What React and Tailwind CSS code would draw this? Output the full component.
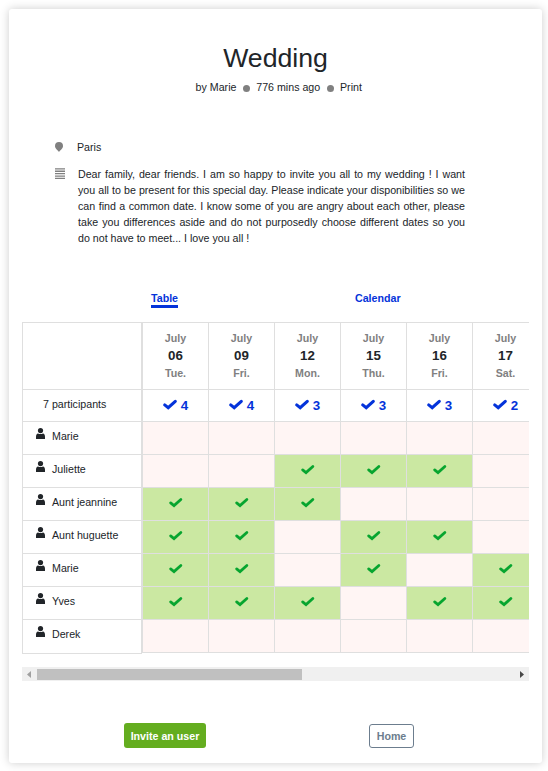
const days = [
  { day: "06", name: "Tue.", count: 4 },
  { day: "09", name: "Fri.", count: 4 },
  { day: "12", name: "Mon.", count: 3 },
  { day: "15", name: "Thu.", count: 3 },
  { day: "16", name: "Fri.", count: 3 },
  { day: "17", name: "Sat.", count: 2 },
];

const participants = [
  { name: "Marie", votes: [0, 0, 0, 0, 0, 0] },
  { name: "Juliette", votes: [0, 0, 1, 1, 1, 0] },
  { name: "Aunt jeannine", votes: [1, 1, 1, 0, 0, 0] },
  { name: "Aunt huguette", votes: [1, 1, 0, 1, 1, 0] },
  { name: "Marie", votes: [1, 1, 0, 1, 0, 1] },
  { name: "Yves", votes: [1, 1, 1, 0, 1, 1] },
  { name: "Derek", votes: [0, 0, 0, 0, 0, 0] },
];

function Tick({ className, weight }) {
  return (
    <svg className={className} viewBox="0 0 14 10" fill="none" stroke="currentColor" strokeWidth={weight} strokeLinecap="round">
      <path d="M1.7 4.9 L5.2 7.7 L12.3 1.4" />
    </svg>
  );
}

function Person() {
  return (
    <svg className="mt-[6px] ml-[13px] h-[12px] w-[9px] shrink-0" viewBox="0 0 9 12" fill="#212529">
      <circle cx="4.5" cy="2.6" r="2.6" />
      <path d="M0 11V8.7C0 6.9 .8 5.6 2 5.4C3.5 6.1 5.5 6.1 7 5.4C8.2 5.6 9 6.9 9 8.7V11Z" />
    </svg>
  );
}

function Dot() {
  return <span className="mt-[3px] size-[7px] rounded-full bg-[#808080]" />;
}

export default function App() {
  return (
    <div className="h-[771px] w-[548px] overflow-hidden bg-white pt-[9px] pl-[9px] font-['Liberation_Sans',Arial,sans-serif] text-[10.67px] leading-4 text-[#212529]">
      <main className="flex h-[754px] w-[533px] flex-col rounded-[3px] bg-white px-[13px] shadow-[0_0_10px_rgba(0,0,0,0.2)]">
        <h1 className="mt-[33px] text-center text-[26.67px] leading-8">Wedding</h1>
        <div className="mt-[5px] flex h-4 items-center justify-center gap-[6.4px] pl-[6.5px]">
          <span>by Marie</span>
          <Dot />
          <span>776 mins ago</span>
          <Dot />
          <span>Print</span>
        </div>

        <section className="mt-[44px] ml-[33px] w-[410px]">
          <div className="flex h-4">
            <svg className="mt-[3px] mr-[14px] h-[10px] w-2" viewBox="0 0 8 10" fill="#808080">
              <path d="M4 0A4 4 0 0 0 0 4C0 6.8 2.6 8 4 10C5.4 8 8 6.8 8 4A4 4 0 0 0 4 0Z" />
            </svg>
            Paris
          </div>
          <div className="mt-[11px] flex">
            <svg className="mt-[2px] mr-[13px] h-[11px] w-[10px] shrink-0" viewBox="0 0 10 11" fill="#808080">
              <path d="M0 .2h10v1.3H0zM0 2.6h10v1.3H0zM0 5h10v1.3H0zM0 7.4h10v1.3H0zM0 9.7h10v1.3H0z" />
            </svg>
            <p className="w-[387px] text-justify">
              Dear family, dear friends. I am so happy to invite you all to my wedding ! I want you all to be present for this special day. Please indicate your disponibilities so we can find a common date. I know some of you are angry about each other, please take you differences aside and do not purposedly choose different dates so you do not have to meet... I love you all !
            </p>
          </div>
        </section>

        <nav className="mt-[44px] flex h-[32px] font-bold text-[#0433da]">
          <div className="ml-[129px] h-[18px] w-[27px] border-b-[3px] border-[#0433da]">Table</div>
          <div className="ml-[177px]">Calendar</div>
        </nav>

        <div className="flex w-[507px] overflow-hidden">
          <div className="w-[120px] shrink-0 border-x border-b border-[#dfdfdf]">
            <div className="h-[67px] border-t border-[#dfdfdf]" />
            <div className="h-[32px] border-t border-[#dfdfdf] pt-[6px] pl-[20px]">7 participants</div>
            {participants.map((p, i) => (
              <div key={i} className="flex h-[33px] border-t border-[#dfdfdf] last:h-[34px]">
                <Person />
                <span className="mt-[6px] ml-[7px]">{p.name}</span>
              </div>
            ))}
          </div>
          <div className="flex h-[331px] border-b border-l border-[#dfdfdf]">
            {days.map((d, c) => (
              <div key={d.day} className="w-[66px] shrink-0 border-r border-[#dfdfdf]">
                <div className="flex h-[67px] flex-col items-center border-t border-[#dfdfdf] pt-[7px] font-bold text-[#808080]">
                  <span>July</span>
                  <span className="mt-px text-[13.33px] leading-[18px] text-[#212529]">{d.day}</span>
                  <span>{d.name}</span>
                </div>
                <div className="flex h-[32px] justify-center gap-[4px] border-t border-[#dfdfdf] pt-[8px] text-[13.33px] font-bold text-[#0433da]">
                  <Tick weight="3.1" className="mt-[1.5px] h-[10px] w-[14px] overflow-visible" />
                  <span>{d.count}</span>
                </div>
                {participants.map((p, i) => (
                  <div
                    key={i}
                    className={`flex h-[33px] justify-center border-t border-[#dfdfdf] pt-[9.5px] ${p.votes[c] ? "bg-[#cbe8a2]" : "bg-[#fff5f4]"}`}
                  >
                    {p.votes[c] ? <Tick weight="2.9" className="h-[10px] w-[13.5px] overflow-visible text-[#07a52f]" /> : null}
                  </div>
                ))}
              </div>
            ))}
          </div>
        </div>

        <div className="mt-[13px] flex h-[14px] w-[507px] items-center bg-[#f0f0f0]">
          <svg className="ml-[5px] h-[7px] w-[4px]" viewBox="0 0 4 7" fill="#a0a0a0">
            <path d="M4 0V7L0 3.5Z" />
          </svg>
          <div className="ml-[6px] h-[11px] w-[265px] bg-[#c0c0c0]" />
          <svg className="mr-[5px] ml-auto h-[7px] w-[4px]" viewBox="0 0 4 7" fill="#484848">
            <path d="M0 0V7L4 3.5Z" />
          </svg>
        </div>

        <div className="mt-[42px] flex items-start font-bold">
          <button className="ml-[102px] h-[25px] w-[82px] rounded-[3px] bg-[#64ad1f] pt-px text-white">Invite an user</button>
          <button className="mt-px ml-[163px] h-[24px] w-[45px] rounded-[3px] border border-[#6c7d8e] text-[#6c7d8e]">Home</button>
        </div>
      </main>
    </div>
  );
}
